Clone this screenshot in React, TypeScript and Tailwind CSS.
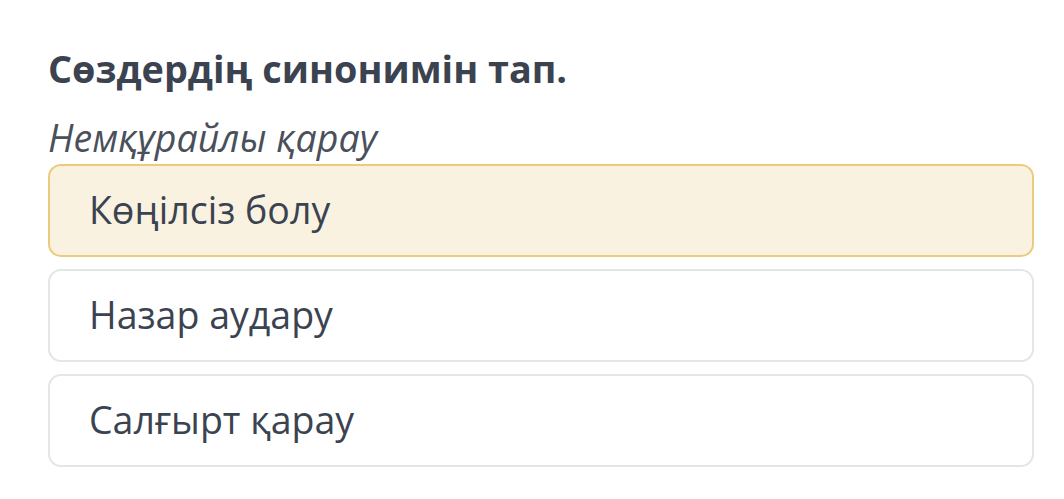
import React from "react";

const OPTIONS = [
  { text: "Көңілсіз болу", selected: true },
  { text: "Назар аудару", selected: false },
  { text: "Салғырт қарау", selected: false },
];

export default function App() {
  return (
    <main
      className="min-h-screen w-[1064px] h-[499px] bg-white pl-[48px] pr-[30px] pt-[44px] text-[#3b4350]"
      style={{ fontFamily: '"Open Sans", "Noto Sans", sans-serif' }}
    >
      <h1 className="text-[37.8px] font-bold leading-[50px]">Сөздердің синонимін тап.</h1>
      <div className="mt-[20px] text-[37.5px] italic leading-[48px] text-[#4a505a]">Немқұрайлы қарау</div>
      <div className="mt-[2px] flex flex-col gap-[12px]">
        {OPTIONS.map((o) => (
          <div
            key={o.text}
            className={`flex h-[93px] items-center rounded-[13px] border-2 pl-[39px] text-[37.5px] ${
              o.selected ? "border-[#ebcb7d] bg-[#faf2e1]" : "border-[#e3e5e6] bg-white"
            }`}
          >
            {o.text}
          </div>
        ))}
      </div>
    </main>
  );
}
